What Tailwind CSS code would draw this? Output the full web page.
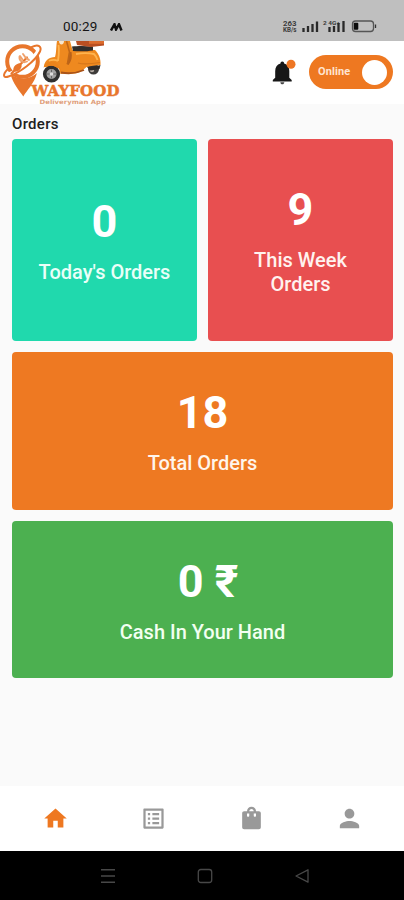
<!DOCTYPE html>
<html lang="en">
<head>
<meta charset="utf-8">
<title>Wayfood</title>
<script src="https://cdn.jsdelivr.net/npm/@tailwindcss/browser@4"></script>
</head>
<body class="w-[404px] h-[900px] overflow-hidden flex flex-col bg-[#fafafa] font-[Roboto,sans-serif]">
<div class="h-[41px] shrink-0 bg-[#bfbfbf] flex justify-between pt-[18px] pl-[63px] pr-[27px]">
  <div class="flex h-[17px] items-center gap-3">
    <span class="text-[13.5px] leading-[17px] tracking-[0.2px] text-[#151515]">00:29</span>
    <svg class="w-[13px] h-[8px]" viewBox="0 0 13 8" fill="none" stroke="#111" stroke-width="2.4"><path d="M1 7.5 4.5 1.2 6 6.500 9 1.200 11.500 7.500"/></svg>
  </div>
  <svg class="w-[96px] h-[17px]" viewBox="281 18 96 17">
    <g fill="#3b3b3b" font-family="Roboto,sans-serif" font-weight="700">
      <text x="283" y="26" font-size="7" textLength="13.500" lengthAdjust="spacingAndGlyphs">263</text>
      <text x="283" y="32.200" font-size="7" textLength="13.500" lengthAdjust="spacingAndGlyphs">KB/s</text>
      <text x="323" y="25" font-size="5.500" textLength="17" lengthAdjust="spacingAndGlyphs">2 4G+</text>
    </g>
    <path d="M303.500 32v-4M308 32v-6M312.500 32v-8M317 32V21.500M329.500 32v-5M334 32v-6M338.500 32v-9M343.500 32V21" stroke="#292929" stroke-width="2.300"/>
    <rect x="352.500" y="21" width="21" height="10.500" rx="3" fill="none" stroke="#555" stroke-width="1.300"/>
    <rect x="353.700" y="22.700" width="4.600" height="7" rx="1" fill="#0c0c0c"/>
    <path d="M375.500 24.500v3.500" stroke="#333" stroke-width="1.300"/>
  </svg>
</div>

<header class="h-[63px] shrink-0 bg-white flex items-start justify-between pr-[11px]">
  <svg class="w-[125px] h-[65px] shrink-0" viewBox="0 41 125 65">
    <path d="M10.500 74C13 84 19 90 23.300 96.500 27 90 34 84 37 73c-7 7-19 7-26.500 1z" fill="#e8762c"/>
    <circle cx="22.500" cy="61.500" r="15.300" fill="#fff" stroke="#e8762c" stroke-width="4"/>
    <path d="M5.500 75C16 73 33 62 40 48" stroke="#fff" stroke-width="4" fill="none"/>
    <path d="M7.500 69.500C2.500 74.500 3 78.500 8.500 76.500 20 72.500 35 61.500 40 51.500 42 46.500 38.500 43.500 31.500 47.200" fill="none" stroke="#e8762c" stroke-width="2" stroke-linecap="round"/>
    <path d="M11.500 73.500 27 57.500" stroke="#e8762c" stroke-width="2.200" stroke-linecap="round"/>
    <ellipse cx="17.500" cy="67.500" rx="3.200" ry="5" transform="rotate(45 17.500 67.500)" fill="#e8762c"/>
    <path d="M19.500 56.500c-.5 4 3 7 7.500 5M20 56l2.500 3.500M23 54l2.500 3.500M26.500 58l2.500 2" stroke="#efa16c" stroke-width="1.900" fill="none" stroke-linecap="round"/>
    <circle cx="93.500" cy="69" r="5.500" fill="#3e3b39"/>
    <circle cx="92" cy="70" r="2.200" fill="#b3aaa2"/>
    <path d="M86 66c5 1 11 0 14.500-1l-1 4-9 1.500z" fill="#2e2a28"/>
    <path d="M57 41h13l2.500 9h22.500c4 4 6 9 5.500 15-5 .5-10 .5-14 2-4 3.500-6 5.500-11 6.500-7 1-11 0-15 .5L59 68 44 67c0-6 5-10 11-10 1.500-4 1-11 2-16z" fill="#ee891f"/>
    <path d="M71.500 52c1 5 0 9-3 13l-2-1c2-4 3-8 3-12z" fill="#b9621a"/>
    <path d="M66.500 41l3 11-2 12" stroke="#bf6617" stroke-width="1.600" fill="none"/>
    <path d="M76 54c6-1 13-1 18 0 2 2 3 4 3.500 6M58.500 45c1 6 0 12-.5 16M49 61c3-1.500 6-1.500 9 0" stroke="#ffb44f" stroke-width="1.800" fill="none"/>
    <path d="M78 63c6 2 13 1 22-.5" stroke="#d5761a" stroke-width="1.200" fill="none"/>
    <path d="M61 72.500c8 1.500 15 1 23-2.500" stroke="#a95319" stroke-width="1.800" fill="none"/>
    <path d="M72 46.500c5-.7 14-.7 21 0v4c-6 1-14 1-20 .5z" fill="#302e2c"/>
    <path d="M76 41h28v4.500l-13 1.500-14-2z" fill="#b94f22"/>
    <path d="M89 41h15v2.800H89z" fill="#dc6c2e"/>
    <path d="M59 41h5c0 2-1 3.500-2.500 3.500S59 43 59 41z" fill="#f6e5ce"/>
    <circle cx="51.500" cy="74" r="6.800" fill="#a3a3a3" stroke="#303030" stroke-width="3.600"/>
    <path d="M51.500 69.500v9M47 74h9" stroke="#666" stroke-width="1"/>
    <circle cx="51.500" cy="74" r="1.800" fill="#dedede"/>
    <path d="M43.500 67.500c2-7 14-10 17.500 3.500-4-5-11-7-17.500-3.500z" fill="#eb841c"/>
    <text x="31.500" y="96.400" font-family="DejaVu Serif,serif" font-weight="700" font-size="15" fill="#e8762c" stroke="#e8762c" stroke-width=".5" textLength="88" lengthAdjust="spacing">WAYFOOD</text>
    <text x="39.500" y="103.700" font-family="DejaVu Sans,sans-serif" font-size="6" font-weight="700" fill="#e0a07c" textLength="66.500" lengthAdjust="spacingAndGlyphs">Deliveryman App</text>
  </svg>
  <div class="flex items-center gap-[13px] pt-[14px]">
    <svg class="w-[26px] h-[28px]" viewBox="270 57 26 28">
      <path d="M282.300 60.500c1.200 0 1.800.8 1.800 2.100 3.600 1 5.200 4 5.200 7.400v6.700l2.400 2.300v1.500h-18.900V79l2.400-2.300V70c0-3.400 1.700-6.400 5.300-7.400 0-1.300.6-2.100 1.800-2.100z" fill="#171717"/>
      <path d="M280.300 81.300h4c-.2 1.400-.9 2-2 2s-1.800-.6-2-2z" fill="#444"/>
      <circle cx="291" cy="63.300" r="4.500" fill="#ee7623"/>
    </svg>
    <div class="w-[84px] h-[34px] rounded-full bg-[#ee7821] flex items-center justify-between pl-[9px] pr-[6px]">
      <span class="text-[11px] tracking-[0.1px] font-bold text-[#ffe5d1]">Online</span>
      <span class="size-[25px] rounded-full bg-white"></span>
    </div>
  </div>
</header>

<main class="flex-1 px-3 pt-[11px]">
  <h1 class="text-[15px] leading-[18px] tracking-[0.3px] font-medium text-[#202020] mb-[6px]">Orders</h1>
  <div class="w-[381px] grid grid-cols-2 gap-[11px] text-white text-center">
    <section class="h-[202px] pb-[2px] rounded-[4px] bg-[#20d9ad] flex flex-col items-center justify-center gap-3">
      <div class="text-[45px] leading-[53px] font-bold">0</div>
      <div class="text-[20px] leading-6 font-medium text-[#e9fff8]">Today's Orders</div>
    </section>
    <section class="h-[202px] pb-[1px] rounded-[4px] bg-[#e84f50] flex flex-col items-center justify-center gap-3">
      <div class="text-[45px] leading-[53px] font-bold">9</div>
      <div class="text-[20px] leading-6 font-medium text-[#fff2ef]">This Week<br>Orders</div>
    </section>
    <section class="col-span-2 h-[158px] pb-[2px] rounded-[4px] bg-[#ee7922] flex flex-col items-center justify-center gap-3">
      <div class="text-[45px] leading-[53px] font-bold">18</div>
      <div class="text-[20px] leading-6 font-medium text-[#fff5eb]">Total Orders</div>
    </section>
    <section class="col-span-2 h-[157px] rounded-[4px] bg-[#4cb050] flex flex-col items-center justify-center gap-3">
      <div class="text-[45px] leading-[53px] font-bold pl-[11px]">0 ₹</div>
      <div class="text-[20px] leading-6 font-medium text-[#f2fff1]">Cash In Your Hand</div>
    </section>
  </div>
</main>

<nav class="h-[65px] shrink-0 bg-white grid grid-cols-4 items-center justify-items-center px-[6px]">
  <svg class="size-[27px]" viewBox="0 0 24 24" fill="#ee7821"><path d="M10 20v-6h4v6h5v-8h3L12 3 2 12h3v8z"/></svg>
  <svg class="size-[27px]" viewBox="0 0 24 24" fill="#999"><path d="M19 5v14H5V5h14m1.100-2H3.900c-.5 0-.9.400-.9.900v16.200c0 .4.400.9.900.9h16.200c.4 0 .9-.5.900-.9V3.900c0-.5-.5-.9-.9-.9zM11 7h6v2h-6V7zm0 4h6v2h-6v-2zm0 4h6v2h-6zM7 7h2v2H7zm0 4h2v2H7zm0 4h2v2H7z"/></svg>
  <svg class="size-[27px]" viewBox="0 0 24 24" fill="#999"><path d="M18.500 6H16c0-2.210-1.790-4-4-4S8 3.790 8 6H5.500C4.400 6 3.700 6.700 3.700 7.700v12.600c0 1 .7 1.700 1.800 1.700h13c1.100 0 1.800-.7 1.800-1.700V7.700c0-1-.7-1.700-1.800-1.700zM10 10c0 .550-.450 1-1 1s-1-.450-1-1V8h2v2zm2-6c1.100 0 2 .9 2 2h-4c0-1.100.9-2 2-2zm4 6c0 .550-.450 1-1 1s-1-.450-1-1V8h2v2z" transform="translate(0 -.5)"/></svg>
  <svg class="size-[29px]" viewBox="0 0 24 24" fill="#999"><path d="M12 12c2.210 0 4-1.790 4-4s-1.790-4-4-4-4 1.790-4 4 1.790 4 4 4zm0 2c-2.670 0-8 1.340-8 4v2h16v-2c0-2.660-5.330-4-8-4z"/></svg>
</nav>

<div class="h-[49px] shrink-0 bg-black flex items-center justify-center gap-[81px] pl-[6px]">
  <svg class="w-[16px] h-[16px]" viewBox="0 0 16 16" stroke="#484848" stroke-width="1.400"><path d="M1 1.700h14M1 8h14M1 14.300h14"/></svg>
  <svg class="w-[16px] h-[16px]" viewBox="0 0 16 16" fill="none" stroke="#484848" stroke-width="1.300"><rect x="1.300" y="1.500" width="13.400" height="13" rx="2.500"/></svg>
  <svg class="w-[16px] h-[16px]" viewBox="0 0 16 16" fill="none" stroke="#484848" stroke-width="1.300" stroke-linejoin="round"><path d="M2 8 14 1.800v12.400z"/></svg>
</div>
</body>
</html>
